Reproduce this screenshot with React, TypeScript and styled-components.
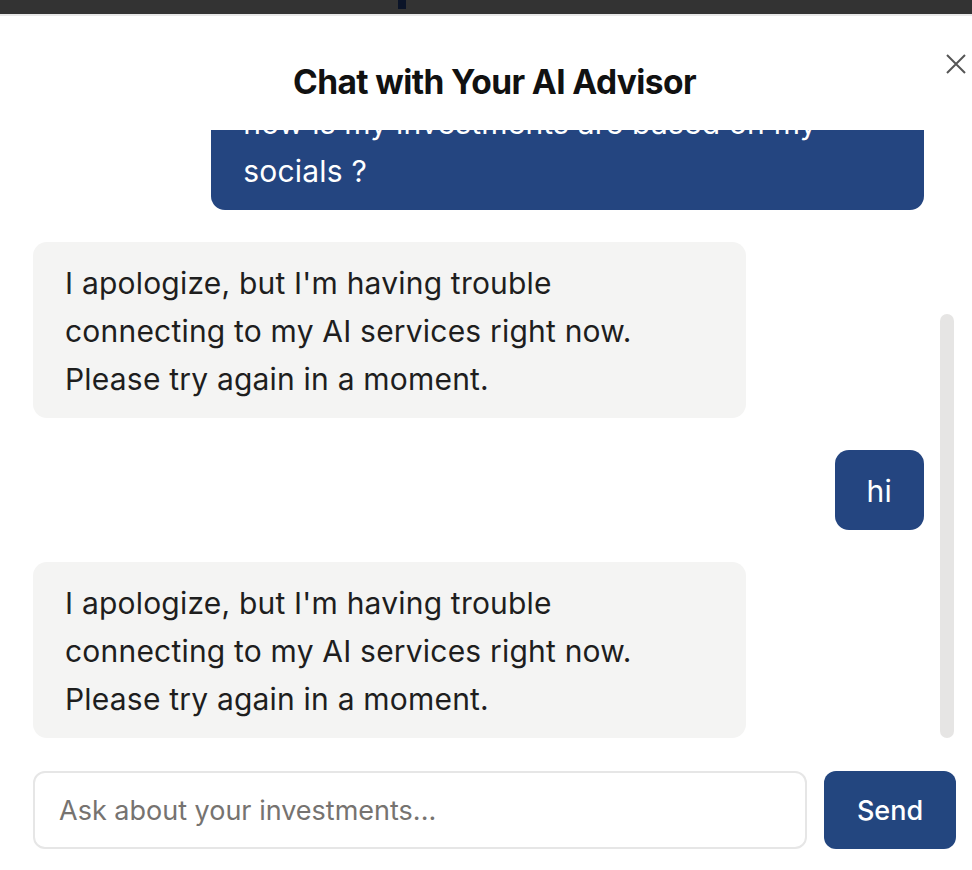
import React, { useLayoutEffect, useRef, useState } from "react";
import styled, { createGlobalStyle } from "styled-components";

const GlobalStyle = createGlobalStyle`
  html, body {
    margin: 0;
    padding: 0;
    background: #ffffff;
    font-family: Inter, "Noto Sans", "Liberation Sans", sans-serif;
    -webkit-font-smoothing: antialiased;
  }
  * { box-sizing: border-box; }
`;

const Page = styled.div`
  width: 972px;
  height: 870px;
  overflow: hidden;
  display: flex;
  flex-direction: column;
`;

const TopBar = styled.div`
  height: 16px;
  flex: 0 0 16px;
  background: #333333;
  border-bottom: 2px solid #e8e8e8;
  display: flex;
`;

const TopMark = styled.div`
  margin-left: 398px;
  width: 8px;
  height: 9px;
  background: #0b1428;
`;

const Modal = styled.section`
  position: relative;
  flex: 1;
  display: flex;
  flex-direction: column;
  padding: 0 16px 0 33px;
`;

const Header = styled.header`
  height: 114px;
  flex: 0 0 114px;
  display: flex;
  justify-content: center;
  padding-top: 47px;
`;

const Title = styled.h2`
  margin: 0;
  font-size: 33.5px;
  line-height: 38px;
  font-weight: 700;
  letter-spacing: -0.6px;
  color: #111111;
`;

const CloseButton = styled.button`
  position: absolute;
  top: 30px;
  right: -2px;
  width: 36px;
  height: 36px;
  padding: 0;
  border: none;
  background: transparent;
  display: flex;
  align-items: center;
  justify-content: center;
  color: #555555;
  cursor: pointer;
`;

const ListWrap = styled.div`
  position: relative;
  height: 608px;
  flex: 0 0 608px;
`;

const MessageList = styled.div`
  height: 100%;
  overflow-y: auto;
  display: flex;
  flex-direction: column;
  gap: 32px;
  padding: 8px 32px 0 0;
  scrollbar-width: none;
  &::-webkit-scrollbar {
    display: none;
  }
`;

const ScrollThumb = styled.div`
  position: absolute;
  right: 2px;
  width: 14px;
  border-radius: 7px;
  background: #e6e5e4;
  pointer-events: none;
`;

const Bubble = styled.div<{ $user?: boolean; $full?: boolean }>`
  align-self: ${(p) => (p.$user ? "flex-end" : "flex-start")};
  width: ${(p) => (p.$full ? "80%" : "auto")};
  max-width: 80%;
  flex: 0 0 auto;
  padding: 17px 32px 15px;
  border-radius: 14px;
  background: ${(p) => (p.$user ? "#244580" : "#f4f4f3")};
  color: ${(p) => (p.$user ? "#ffffff" : "#1e1e1e")};
  font-size: 30px;
  line-height: 48px;
  letter-spacing: 0.2px;
  font-weight: 400;
  white-space: nowrap;
`;

const InputRow = styled.form`
  display: flex;
  gap: 17px;
  margin-top: 33px;
  height: 78px;
`;

const Input = styled.input`
  flex: 1;
  height: 78px;
  border: 2px solid #e6e6e6;
  border-radius: 12px;
  padding: 0 24px;
  font-family: inherit;
  font-size: 27px;
  color: #1e1e1e;
  outline: none;
  &::placeholder {
    color: #767370;
  }
`;

const SendButton = styled.button`
  width: 132px;
  height: 78px;
  border: none;
  border-radius: 12px;
  background: #23467f;
  color: #ffffff;
  font-family: inherit;
  font-size: 27px;
  font-weight: 500;
  cursor: pointer;
`;

type Msg = { user?: boolean; lines: string[] };

const messages: Msg[] = [
  {
    lines: [
      "Hello! I'm your AI investment advisor.",
      "Ask me anything about your portfolio,",
      "market trends or strategies.",
    ],
  },
  { user: true, lines: ["how is my investments are based on my", "socials ?"] },
  {
    lines: [
      "I apologize, but I'm having trouble",
      "connecting to my AI services right now.",
      "Please try again in a moment.",
    ],
  },
  { user: true, lines: ["hi"] },
  {
    lines: [
      "I apologize, but I'm having trouble",
      "connecting to my AI services right now.",
      "Please try again in a moment.",
    ],
  },
];

export default function App() {
  const listRef = useRef<HTMLDivElement>(null);
  const [thumb, setThumb] = useState({ top: 0, height: 0 });

  useLayoutEffect(() => {
    const el = listRef.current;
    if (!el) return;
    el.scrollTop = el.scrollHeight;
    const update = () => {
      const ch = el.clientHeight;
      const sh = el.scrollHeight;
      if (sh <= ch) {
        setThumb({ top: 0, height: 0 });
        return;
      }
      setThumb({
        top: (el.scrollTop / sh) * ch,
        height: (ch * ch) / sh,
      });
    };
    update();
    el.addEventListener("scroll", update);
    return () => el.removeEventListener("scroll", update);
  }, []);

  return (
    <Page>
      <GlobalStyle />
      <TopBar>
        <TopMark />
      </TopBar>
      <Modal>
        <Header>
          <Title>Chat with Your AI Advisor</Title>
        </Header>
        <CloseButton type="button" aria-label="Close">
          <svg width="36" height="36" viewBox="0 0 36 36" fill="none">
            <path
              d="M9 9 L27 27 M27 9 L9 27"
              stroke="currentColor"
              strokeWidth="2"
              strokeLinecap="butt"
            />
          </svg>
        </CloseButton>
        <ListWrap>
          <MessageList ref={listRef}>
            {messages.map((m, i) => (
              <Bubble key={i} $user={m.user} $full={m.lines.length > 1}>
                {m.lines.map((l, j) => (
                  <React.Fragment key={j}>
                    {j > 0 && <br />}
                    {l}
                  </React.Fragment>
                ))}
              </Bubble>
            ))}
          </MessageList>
          {thumb.height > 0 && (
            <ScrollThumb style={{ top: thumb.top, height: thumb.height }} />
          )}
        </ListWrap>
        <InputRow onSubmit={(e) => e.preventDefault()}>
          <Input placeholder="Ask about your investments..." />
          <SendButton type="submit">Send</SendButton>
        </InputRow>
      </Modal>
    </Page>
  );
}
